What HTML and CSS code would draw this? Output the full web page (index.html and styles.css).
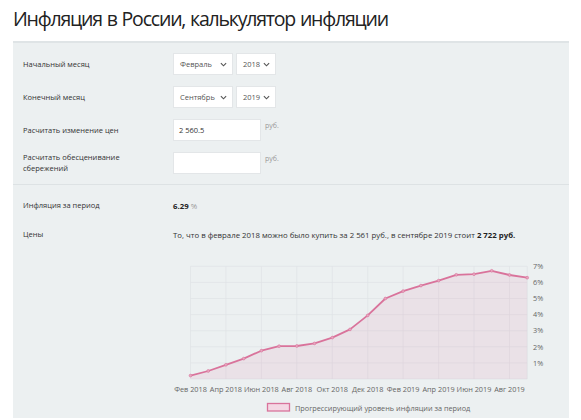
FILE: index.html
```html
<!DOCTYPE html>
<html lang="ru">
<head>
<meta charset="utf-8">
<link rel="stylesheet" href="styles.css">
</head>
<body>
<h1 class="title">Инфляция в России, калькулятор инфляции</h1>
<div class="panel">
  <div class="form">
    <div class="row">
      <div class="label">Начальный месяц</div>
      <div class="controls">
        <div class="select w-month"><span>Февраль</span><svg class="chev" viewBox="0 0 8 5" width="7" height="5"><path d="M1 1l3 3 3-3" fill="none" stroke="#555" stroke-width="1.3"/></svg></div>
        <div class="select w-year"><span>2018</span><svg class="chev" viewBox="0 0 8 5" width="7" height="5"><path d="M1 1l3 3 3-3" fill="none" stroke="#555" stroke-width="1.3"/></svg></div>
      </div>
    </div>
    <div class="row">
      <div class="label">Конечный месяц</div>
      <div class="controls">
        <div class="select w-month"><span>Сентябрь</span><svg class="chev" viewBox="0 0 8 5" width="7" height="5"><path d="M1 1l3 3 3-3" fill="none" stroke="#555" stroke-width="1.3"/></svg></div>
        <div class="select w-year"><span>2019</span><svg class="chev" viewBox="0 0 8 5" width="7" height="5"><path d="M1 1l3 3 3-3" fill="none" stroke="#555" stroke-width="1.3"/></svg></div>
      </div>
    </div>
    <div class="row">
      <div class="label">Расчитать изменение цен</div>
      <div class="controls">
        <div class="input">2 560.5</div>
        <span class="unit">руб.</span>
      </div>
    </div>
    <div class="row">
      <div class="label">Расчитать обесценивание<br>сбережений</div>
      <div class="controls">
        <div class="input"></div>
        <span class="unit">руб.</span>
      </div>
    </div>
  </div>
  <div class="results">
    <div class="rrow">
      <div class="label">Инфляция за период</div>
      <div class="value"><b>6.29</b> <span class="pct">%</span></div>
    </div>
    <div class="rrow">
      <div class="label">Цены</div>
      <div class="value">То, что в феврале 2018 можно было купить за 2 561 руб., в сентябре 2019 стоит <b>2 722 руб.</b></div>
    </div>
  </div>
  <svg class="chart" viewBox="13 250 556 170" width="556" height="170">
    <g class="grid" stroke="#dfe3e5" stroke-width="0.7">
      <line x1="190.5" y1="266.3" x2="527.2" y2="266.3"/>
      <line x1="190.5" y1="282.4" x2="527.2" y2="282.4"/>
      <line x1="190.5" y1="298.5" x2="527.2" y2="298.5"/>
      <line x1="190.5" y1="314.6" x2="527.2" y2="314.6"/>
      <line x1="190.5" y1="330.7" x2="527.2" y2="330.7"/>
      <line x1="190.5" y1="346.8" x2="527.2" y2="346.8"/>
      <line x1="190.5" y1="362.9" x2="527.2" y2="362.9"/>
      <line x1="190.5" y1="379" x2="527.2" y2="379"/>
      <line x1="190.5" y1="266.3" x2="190.5" y2="379"/>
      <line x1="225.9" y1="266.3" x2="225.9" y2="379"/>
      <line x1="261.4" y1="266.3" x2="261.4" y2="379"/>
      <line x1="296.8" y1="266.3" x2="296.8" y2="379"/>
      <line x1="332.3" y1="266.3" x2="332.3" y2="379"/>
      <line x1="367.7" y1="266.3" x2="367.7" y2="379"/>
      <line x1="403.1" y1="266.3" x2="403.1" y2="379"/>
      <line x1="438.6" y1="266.3" x2="438.6" y2="379"/>
      <line x1="474.0" y1="266.3" x2="474.0" y2="379"/>
      <line x1="509.5" y1="266.3" x2="509.5" y2="379"/>
      <line x1="527.2" y1="266.3" x2="527.2" y2="379"/>
    </g>
    <path class="area" d="M190.5 375.6 L208.2 371.0 L225.9 364.8 L243.7 358.6 L261.4 350.7 L279.1 346.2 L296.8 346.0 L314.5 343.4 L332.3 337.6 L350.0 329.4 L367.7 315.4 L385.4 298.5 L403.1 291.1 L420.9 285.6 L438.6 280.6 L456.3 274.8 L474.0 274.2 L491.7 270.8 L509.5 275.0 L527.2 277.7 L527.2 379 L190.5 379 Z"/>
    <path class="line" d="M190.5 375.6 L208.2 371.0 L225.9 364.8 L243.7 358.6 L261.4 350.7 L279.1 346.2 L296.8 346.0 L314.5 343.4 L332.3 337.6 L350.0 329.4 L367.7 315.4 L385.4 298.5 L403.1 291.1 L420.9 285.6 L438.6 280.6 L456.3 274.8 L474.0 274.2 L491.7 270.8 L509.5 275.0 L527.2 277.7"/>
    <g class="dots">
      <circle cx="190.5" cy="375.6" r="1.4"/><circle cx="208.2" cy="371.0" r="1.4"/><circle cx="225.9" cy="364.8" r="1.4"/><circle cx="243.7" cy="358.6" r="1.4"/><circle cx="261.4" cy="350.7" r="1.4"/><circle cx="279.1" cy="346.2" r="1.4"/><circle cx="296.8" cy="346.0" r="1.4"/><circle cx="314.5" cy="343.4" r="1.4"/><circle cx="332.3" cy="337.6" r="1.4"/><circle cx="350.0" cy="329.4" r="1.4"/><circle cx="367.7" cy="315.4" r="1.4"/><circle cx="385.4" cy="298.5" r="1.4"/><circle cx="403.1" cy="291.1" r="1.4"/><circle cx="420.9" cy="285.6" r="1.4"/><circle cx="438.6" cy="280.6" r="1.4"/><circle cx="456.3" cy="274.8" r="1.4"/><circle cx="474.0" cy="274.2" r="1.4"/><circle cx="491.7" cy="270.8" r="1.4"/><circle cx="509.5" cy="275.0" r="1.4"/><circle cx="527.2" cy="277.7" r="1.4"/>
    </g>
    <g class="ylab">
      <text x="533" y="269">7%</text>
      <text x="533" y="285">6%</text>
      <text x="533" y="301">5%</text>
      <text x="533" y="317">4%</text>
      <text x="533" y="333">3%</text>
      <text x="533" y="349.5">2%</text>
      <text x="533" y="365.5">1%</text>
    </g>
    <g class="xlab">
      <text x="190.5" y="392">Фев 2018</text>
      <text x="225.9" y="392">Апр 2018</text>
      <text x="261.4" y="392">Июн 2018</text>
      <text x="296.8" y="392">Авг 2018</text>
      <text x="332.3" y="392">Окт 2018</text>
      <text x="367.7" y="392">Дек 2018</text>
      <text x="403.1" y="392">Фев 2019</text>
      <text x="438.6" y="392">Апр 2019</text>
      <text x="474.0" y="392">Июн 2019</text>
      <text x="509.5" y="392">Авг 2019</text>
    </g>
    <rect class="legend-box" x="267.5" y="403.5" width="22" height="7.5"/>
    <text class="legend" x="295" y="410.5">Прогрессирующий уровень инфляции за период</text>
  </svg>
</div>
</body>
</html>
```
FILE: styles.css
```css
* { box-sizing: border-box; }
body {
  margin: 0;
  background: #fff;
  font-family: "Open Sans", "Noto Sans", sans-serif;
  color: #333;
}
.title {
  margin: 0;
  padding: 5px 0 0 13px;
  height: 41px;
  font-weight: 400;
  font-size: 19.5px;
  letter-spacing: -1.2px;
  word-spacing: 1px;
  color: #222;
}
.panel {
  margin: 0 12px 0 13px;
  background: #ecf0f1;
  border-top: 2px solid #dfe4e6;
  height: 377px;
}
.form {
  padding: 10px 0 10px 10px;
  display: flex;
  flex-direction: column;
  gap: 11px;
  border-bottom: 1px solid #dde2e4;
}
.row {
  display: flex;
  align-items: center;
  min-height: 22px;
}
.label {
  width: 150px;
  font-size: 7.5px;
  line-height: 11px;
  color: #333;
}
.controls {
  display: flex;
  align-items: flex-start;
  gap: 3px;
}
.select {
  height: 22px;
  background: #fff;
  border: 1px solid #e3e6e8;
  display: flex;
  align-items: center;
  justify-content: space-between;
  padding: 0 5px 0 6px;
  font-size: 7.5px;
  color: #555;
}
.w-month { width: 60px; }
.w-year { width: 40px; }
.input {
  width: 88px;
  height: 22px;
  background: #fff;
  border: 1px solid #e3e6e8;
  font-size: 7.5px;
  color: #333;
  display: flex;
  align-items: center;
  padding-left: 5px;
}
.unit {
  font-size: 7px;
  color: #999;
  margin-left: 1px;
  line-height: 10px;
  margin-top: 2px;
}
.results {
  padding: 15px 0 0 10px;
  display: flex;
  flex-direction: column;
  gap: 18px;
}
.rrow {
  display: flex;
  align-items: center;
  height: 11px;
}
.value {
  font-size: 7.8px;
  color: #333;
  white-space: nowrap;
}
.value b { font-weight: 700; color: #222; }
.pct { color: #999; }
.chart {
  display: block;
  margin-top: 10px;
}
.area { fill: rgba(219, 112, 153, 0.11); stroke: none; }
.line { fill: none; stroke: #d9739b; stroke-width: 1.8; stroke-linejoin: round; }
.dots circle { fill: #e8a6c0; stroke: #d9739b; stroke-width: 0.6; }
.ylab text { font-size: 7.3px; fill: #666; font-family: "Open Sans", sans-serif; }
.xlab text { font-size: 7.3px; fill: #666; text-anchor: middle; font-family: "Open Sans", sans-serif; }
.legend-box { fill: #f4d8e4; stroke: #d9739b; stroke-width: 1.3; }
.legend { font-size: 7.3px; fill: #666; font-family: "Open Sans", sans-serif; }
```
